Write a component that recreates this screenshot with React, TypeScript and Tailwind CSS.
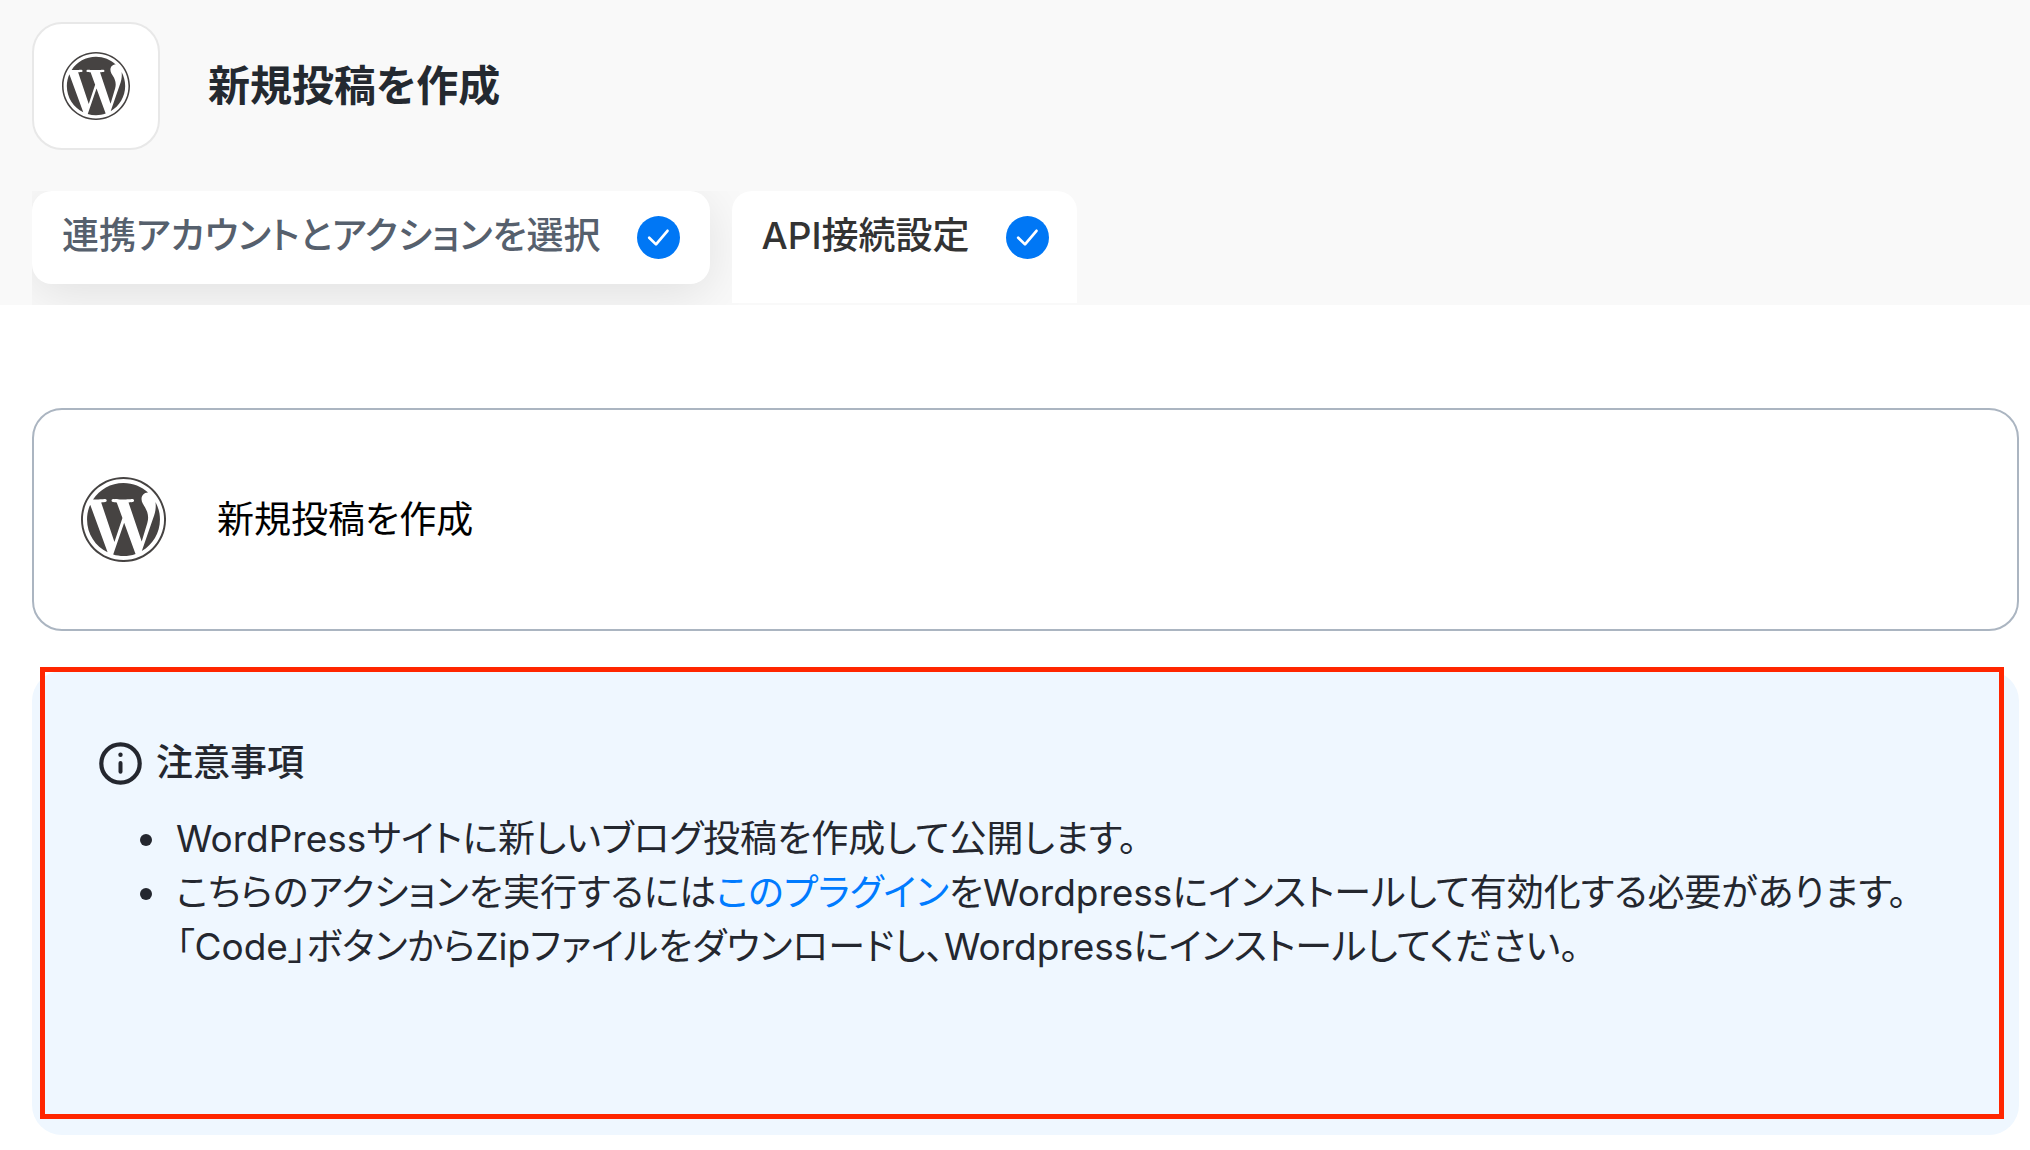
import { useState } from "react"

const tabs = [
  { id: "account", label: "連携アカウントとアクションを選択" },
  { id: "api", label: "API接続設定" },
]

function WordPressLogo({ className }: { className: string }) {
  return (
    <svg className={className} viewBox="0 0 122.52 122.52" fill="#464342" aria-hidden="true">
      <path d="m8.708 61.26c0 20.802 12.089 38.779 29.619 47.298l-25.069-68.686c-2.916 6.536-4.55 13.769-4.55 21.388z" />
      <path d="m96.74 58.608c0-6.495-2.333-10.993-4.334-14.494-2.664-4.329-5.161-7.995-5.161-12.324 0-4.831 3.664-9.328 8.825-9.328.233 0 .454.029.681.042-9.35-8.566-21.807-13.796-35.489-13.796-18.36 0-34.513 9.42-43.91 23.688 1.233.037 2.395.063 3.382.063 5.497 0 14.006-.667 14.006-.667 2.833-.167 3.167 3.994.337 4.329 0 0-2.847.335-6.015.501l19.138 56.925 11.501-34.493-8.188-22.434c-2.83-.166-5.511-.501-5.511-.501-2.832-.166-2.5-4.496.332-4.329 0 0 8.679.667 13.843.667 5.496 0 14.006-.667 14.006-.667 2.835-.167 3.168 3.994.337 4.329 0 0-2.853.335-6.015.501l18.992 56.494 5.242-17.517c2.272-7.269 4.001-12.49 4.001-16.989z" />
      <path d="m62.184 65.857-15.768 45.819c4.708 1.384 9.687 2.141 14.846 2.141 6.12 0 11.989-1.058 17.452-2.979-.141-.225-.269-.464-.374-.724z" />
      <path d="m107.376 36.046c.226 1.674.354 3.471.354 5.404 0 5.333-.996 11.328-3.996 18.824l-16.053 46.413c15.624-9.111 26.133-26.038 26.133-45.426.001-9.137-2.333-17.729-6.438-25.215z" />
      <path d="m61.262 0c-33.779 0-61.262 27.481-61.262 61.26 0 33.783 27.483 61.263 61.262 61.263 33.778 0 61.265-27.48 61.265-61.263-.001-33.779-27.487-61.26-61.265-61.26zm0 119.715c-32.23 0-58.453-26.223-58.453-58.455 0-32.23 26.222-58.451 58.453-58.451 32.229 0 58.45 26.221 58.45 58.451 0 32.232-26.221 58.455-58.45 58.455z" />
    </svg>
  )
}

function CheckBadge() {
  return (
    <svg className="size-[43px] shrink-0" viewBox="0 0 43 43" fill="none" aria-hidden="true">
      <circle cx="21.5" cy="21.5" r="21.5" fill="#0077f5" />
      <path
        d="M12.2 21.8l6.8 6.6L30.5 14.8"
        stroke="#fff"
        strokeWidth="2.7"
        strokeLinecap="round"
        strokeLinejoin="round"
      />
    </svg>
  )
}

function InfoIcon() {
  return (
    <svg className="size-[43px] shrink-0" viewBox="0 0 43 43" fill="none" aria-hidden="true">
      <circle cx="21.5" cy="21.5" r="19.2" stroke="#24272f" strokeWidth="4.2" />
      <circle cx="21.5" cy="12.8" r="2.2" fill="#24272f" />
      <path d="M21.5 21v8.8" stroke="#24272f" strokeWidth="4" strokeLinecap="round" />
    </svg>
  )
}

export default function App() {
  const [active, setActive] = useState("api")

  return (
    <div className="min-h-screen bg-white font-['Inter','Noto_Sans_CJK_JP',sans-serif] text-[37px]/[54px] text-[#24272f] [font-feature-settings:'palt']">
      <header className="bg-[#f9f9f9] px-8 pt-[22px]">
        <div className="flex items-center gap-12">
          <div className="flex size-32 items-center justify-center rounded-[30px] border-2 border-[#e8e8e8] bg-white">
            <WordPressLogo className="size-[68px]" />
          </div>
          <h1 className="text-[42px]/[60px] font-bold text-[#242930]">新規投稿を作成</h1>
        </div>

        <div className="mt-[41px] flex w-fit items-start gap-[22px] overflow-hidden pb-0.5" role="tablist">
          {tabs.map((tab) => (
            <button
              key={tab.id}
              type="button"
              role="tab"
              aria-selected={active === tab.id}
              onClick={() => setActive(tab.id)}
              className={
                active === tab.id
                  ? "relative flex h-28 items-start gap-9 rounded-t-[20px] bg-white pr-7 pl-[30px] pt-[18px] font-medium text-[#333]"
                  : "flex h-[93px] items-start gap-9 rounded-[20px] bg-white px-[30px] pt-[18px] font-medium text-[#56606d] shadow-[0_10px_50px_rgba(0,0,0,0.1)]"
              }
            >
              {tab.label}
              <span className="pt-[7px]">
                <CheckBadge />
              </span>
            </button>
          ))}
        </div>
      </header>

      <main className="pt-[103px] pr-[11px] pl-8">
        <section className="flex items-center gap-[51px] rounded-[30px] border-2 border-[#abb5c1] px-[47px] py-[67px] text-black">
          <WordPressLogo className="size-[85px]" />
          <p>新規投稿を作成</p>
        </section>

        <section className="relative mt-10 rounded-[30px] bg-[#eff7ff] px-[67px] pt-[65px] pb-[161px]">
          <div className="pointer-events-none absolute -top-1 right-[15px] bottom-4 left-2 border-[5px] border-[#ff2600]" />
          <h2 className="flex items-center gap-3.5 font-medium">
            <InfoIcon />
            注意事項
          </h2>
          <ul className="mt-[22px] pl-[41px]">
            <li className="flex gap-6">
              <span className="mt-[22px] size-3 shrink-0 rounded-full bg-[#24272f]" />
              <p>WordPressサイトに新しいブログ投稿を作成して公開します。</p>
            </li>
            <li className="flex gap-6">
              <span className="mt-[22px] size-3 shrink-0 rounded-full bg-[#24272f]" />
              <p>
                こちらのアクションを実行するには
                <a href="#plugin" className="text-[#007bff]">このプラグイン</a>
                をWordpressにインストールして有効化する必要があります。
                <br />
                「Code」ボタンからZipファイルをダウンロードし、Wordpressにインストールしてください。
              </p>
            </li>
          </ul>
        </section>
      </main>
    </div>
  )
}
